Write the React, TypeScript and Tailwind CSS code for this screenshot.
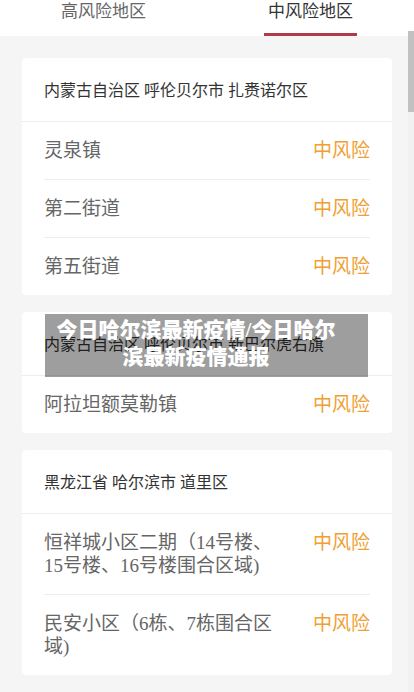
import React from "react";

type Row = { name: string; level: string };
type Area = { title: string; rows: Row[] };

const areas: Area[] = [
  {
    title: "内蒙古自治区 呼伦贝尔市 扎赉诺尔区",
    rows: [
      { name: "灵泉镇", level: "中风险" },
      { name: "第二街道", level: "中风险" },
      { name: "第五街道", level: "中风险" },
    ],
  },
  {
    title: "内蒙古自治区 呼伦贝尔市 新巴尔虎右旗",
    rows: [{ name: "阿拉坦额莫勒镇", level: "中风险" }],
  },
  {
    title: "黑龙江省 哈尔滨市 道里区",
    rows: [
      { name: "恒祥城小区二期（14号楼、15号楼、16号楼围合区域)", level: "中风险" },
      { name: "民安小区（6栋、7栋围合区域)", level: "中风险" },
    ],
  },
];

function Card({ area, overlay }: { area: Area; overlay?: boolean }) {
  return (
    <div className="relative bg-white rounded-[4px]">
      <div className="pl-[22px] pr-[22px] pt-[21px] pb-[19px] border-b border-[#eeeeee] text-[16px] leading-[23px] text-[#333333]">
        {area.title}
      </div>
      <div className="px-[22px]">
        {area.rows.map((r, i) => (
          <div
            key={i}
            className={
              "flex justify-between items-start pt-[17px] pb-[17px] " +
              (i > 0 ? "border-t border-[#eeeeee]" : "")
            }
          >
            <div className="max-w-[236px] text-[19px] leading-[23px] text-[#666666]">{r.name}</div>
            <div className="whitespace-nowrap text-[19px] leading-[23px] text-[#f0a033]">{r.level}</div>
          </div>
        ))}
      </div>
      {overlay && (
        <div className="absolute left-[23px] top-[2px] w-[323px] h-[63px] bg-[rgba(0,0,0,0.38)] pt-[3px]">
          <div className="ml-[5px] w-[292px] text-center text-white font-black text-[21px] leading-[27px]">
            今日哈尔滨最新疫情/今日哈尔滨最新疫情通报
          </div>
        </div>
      )}
    </div>
  );
}

export default function App() {
  return (
    <div
      className="relative w-[414px] h-[692px] overflow-hidden bg-[#f5f5f5]"
      style={{ fontFamily: '"Liberation Serif", "Noto Sans CJK SC", serif' }}
    >
      <div className="flex h-[36px] bg-white">
        <div className="flex-1 flex flex-col items-center">
          <div className="text-[17px] leading-[24px] text-[#666666]">高风险地区</div>
        </div>
        <div className="flex-1 flex flex-col items-center">
          <div className="text-[17px] leading-[24px] text-[#333333]">中风险地区</div>
          <div className="mt-[9px] w-[93px] h-[3px] bg-[#b03a48]" />
        </div>
      </div>
      <div className="flex flex-col gap-[17px] px-[22px] pt-[22px]">
        <Card area={areas[0]} />
        <Card area={areas[1]} overlay />
        <Card area={areas[2]} />
      </div>
      <div className="absolute right-0 top-[31px] bottom-0 w-[6px] bg-[#f1f1f1]">
        <div className="w-[6px] h-[81px] bg-[#c1c1c1]" />
      </div>
    </div>
  );
}
